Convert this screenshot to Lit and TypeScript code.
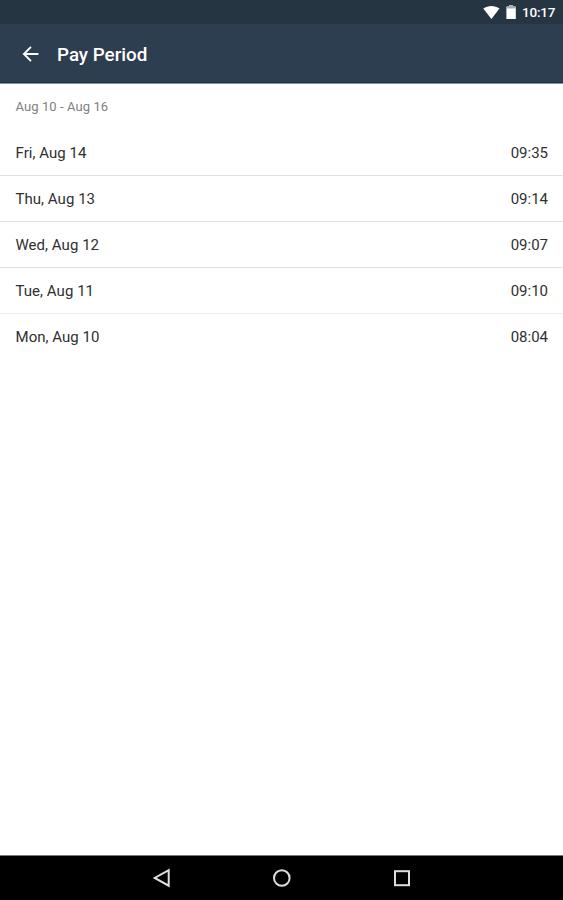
import { LitElement, html, css } from "lit";
import { customElement } from "lit/decorators.js";

const rows = [
  ["Fri, Aug 14", "09:35"],
  ["Thu, Aug 13", "09:14"],
  ["Wed, Aug 12", "09:07"],
  ["Tue, Aug 11", "09:10"],
  ["Mon, Aug 10", "08:04"],
];

@customElement("app-root")
export class AppRoot extends LitElement {
  static styles = css`
    :host { display: flex; flex-direction: column; height: 900px; background: #fff; font-family: Roboto, sans-serif; color: #303030; }
    * { box-sizing: border-box; }
    svg { display: block; }
    .status { height: 24px; background: #263542; color: #fff; display: flex; align-items: center; justify-content: flex-end; padding: 0 8px 0 0; font-size: 13.5px; font-weight: 500; }
    .status span { line-height: 16px; padding-bottom: 1px; width: 33px; letter-spacing: -0.2px; }
    .bar { height: 60px; background: #2d3e50; border-bottom: 1px solid #8492a0; box-shadow: inset 0 -1px #1b3149; color: #fff; display: flex; align-items: center; padding: 1px 0 0 22px; }
    .title { margin: 1px 0 0 17px; font-size: 18.8px; font-weight: 500; line-height: 24px; }
    .range { height: 46px; line-height: 46px; padding: 0 15.5px; font-size: 13px; letter-spacing: 0.08px; color: #808080; }
    .row { height: 46px; display: flex; justify-content: space-between; align-items: center; padding: 1px 15px 0 15.5px; font-size: 15px; border-bottom: 1px solid #e0e0e0; }
    .row span:first-child { letter-spacing: 0.04px; }
    .row:nth-child(4) { border-bottom-color: #ececec; }
    .row:last-child { border-bottom-color: transparent; }
    main { flex: 1; }
    .nav { height: 45px; background: #000; border-top: 1px solid #777; display: flex; justify-content: center; }
  `;

  render() {
    return html`
      <div class="status">
        <svg width="39" height="24" viewBox="0 0 39 24" fill="#fff">
          <path d="M0.3 8.6C4.9 5.1 11.9 5.1 16.5 8.6L8.4 18.9Z"/>
          <path d="M26.2 5.3h3.8v1.3h2.2q.6 0 .6.6v11.2q0 .6-.6.6h-8.2q-.6 0-.6-.6V7.2q0-.6.6-.6h2.2Z"/>
          <path d="M23.4 7.2q0-.6.6-.6h2.2V5.3H30v1.3h2.2q.6 0 .6.6v1.2h-9.4Z" fill="#a6adb4"/>
        </svg>
        <span>10:17</span>
      </div>
      <header class="bar">
        <svg width="18" height="18" viewBox="0 0 18 18" fill="none" stroke="#fff" stroke-width="1.9"><path d="M16.4 9H2.5M9 1.9L1.9 9L9 16.1"/></svg>
        <h1 class="title">Pay Period</h1>
      </header>
      <main>
        <div class="range">Aug 10 - Aug 16</div>
        <div>${rows.map(([d, t]) => html`<div class="row"><span>${d}</span><span>${t}</span></div>`)}</div>
      </main>
      <nav class="nav">
        <svg width="301" height="44" viewBox="131 856 301 44" fill="none" stroke="#dedede" stroke-width="2">
          <path d="M168.7 870.1V885.7L154.7 877.9Z"/>
          <circle cx="281.8" cy="878" r="7.8"/>
          <rect x="395" y="871.2" width="14" height="14"/>
        </svg>
      </nav>
    `;
  }
}
